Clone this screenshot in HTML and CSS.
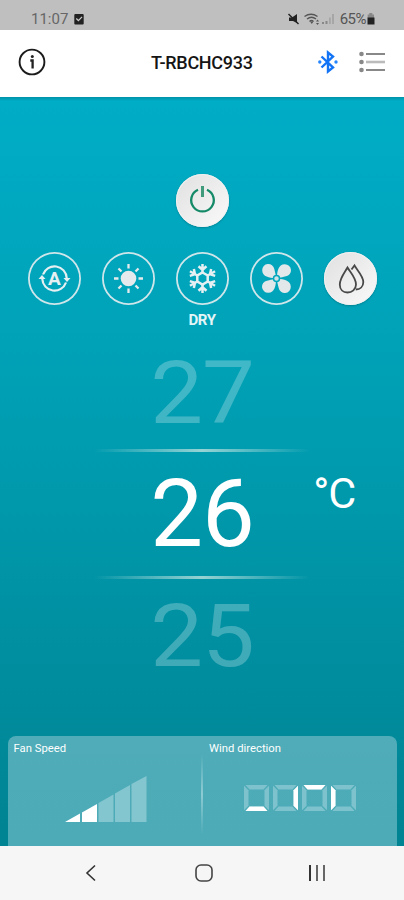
FILE: index.html
```html
<!DOCTYPE html>
<html lang="en">
<head>
    <meta charset="UTF-8">
    <meta name="viewport" content="width=device-width, initial-scale=1.0">
    <title>T-RBCHC933</title>
    <link rel="stylesheet" href="styles.css">
</head>
<body>

<div class="status-bar">
    <span class="clock">11:07</span>
    <svg class="check-icon" width="10" height="12" viewBox="0 0 10 12">
        <rect x="0.3" y="1" width="9.4" height="10.5" rx="1" fill="#222"/>
        <path d="M2.3 5.5 4.4 7.6 8 3.9" fill="none" stroke="#ccc" stroke-width="1.3"/>
    </svg>
    <svg class="signal-icons" width="49" height="14" viewBox="0 0 49 14">
        <path d="M1 5.500h3l5-3.500v9L5 9H1z" fill="#222"/>
        <path d="M0.500 2 10.500 12" stroke="#222" stroke-width="1.500"/>
        <g fill="none" stroke="#555" stroke-width="1.400">
            <path d="M16.500 4.500q6.500-4.500 13 0M19 7q4.500-3.500 9 0M21.500 9.500q2-1.800 4 0"/>
        </g>
        <path d="M22 9.500h3.500l-1.700 2.500zM28 9.500l1.500-2 1.500 2zM28 11l1.500 2 1.500-2z" fill="#555"/>
        <path d="M34 12v-2h2v2zM37.500 12V9h2v3z" fill="#888"/>
        <path d="M41 12V5.500h1.800V12zM44 12V2h2v10z" fill="#a6a6a6"/>
    </svg>
    <span class="battery-text">65%</span>
    <svg width="8" height="12" viewBox="0 0 8 12">
        <path d="M2.300 0h3v1.500H7V5H.7V1.500h1.600z" fill="#888"/>
        <path d="M.5 4.500h7v7h-7z" fill="#222"/>
    </svg>
</div>

<header class="header">
    <svg width="28" height="28" viewBox="0 0 28 28">
        <circle cx="14" cy="14" r="12.400" fill="none" stroke="#1b1b1b" stroke-width="1.900"/>
        <circle cx="14.300" cy="8.500" r="1.500" fill="#222"/>
        <path d="M12.300 12.500h2.300V20.500" fill="none" stroke="#222" stroke-width="2.300"/>
    </svg>
    <h1 class="title">T-RBCHC933</h1>
    <svg class="bluetooth" width="22" height="24" viewBox="0 0 22 24">
        <path d="M4.500 6.500 16 17.500 11 21.500V2.500l5 4L4.500 17.500" fill="none" stroke="#1273f5" stroke-width="2.400"/>
        <circle cx="2.800" cy="12" r="1.700" fill="#2585ff"/>
        <circle cx="19" cy="12" r="1.700" fill="#2585ff"/>
    </svg>
    <svg class="menu" width="26" height="22" viewBox="0 0 26 22">
        <g fill="#888">
            <circle cx="2.500" cy="3" r="2.300"/>
            <circle cx="2.500" cy="11" r="2.300"/>
            <circle cx="2.500" cy="19" r="2.300"/>
        </g>
        <path d="M7 3h19M7 19h19" stroke="#888" stroke-width="1.800"/>
        <path d="M7 11h19" stroke="#bbb" stroke-width="2.600"/>
    </svg>
</header>

<main class="main">
    <button class="round-btn filled power" aria-label="Power">
        <svg width="53" height="53" viewBox="0 0 53 53">
            <path d="M22 15.800A11.300 11.300 0 1 0 31 15.800" fill="none" stroke="#158a68" stroke-width="2.300"/>
            <path d="M26.500 12v11" stroke="#3f9b7c" stroke-width="3"/>
        </svg>
    </button>

    <div class="modes">
        <button class="round-btn" aria-label="Auto">
            <svg width="53" height="53" viewBox="0 0 53 53">
                <g fill="none" stroke="#e6f0f2" stroke-width="2.200">
                    <path d="M15 22.500A12.200 12.200 0 0 1 38.700 26M38 30.500A12.200 12.200 0 0 1 14.300 27"/>
                </g>
                <path d="M35.500 26h7L39 30zM10.500 27h7L14 23z" fill="#e6f0f2"/>
                <text class="auto-letter" x="26.500" y="33.300" text-anchor="middle">A</text>
            </svg>
        </button>
        <button class="round-btn" aria-label="Heat">
            <svg width="53" height="53" viewBox="0 0 53 53">
                <circle cx="26.500" cy="26.500" r="7.800" fill="#e6eaec"/>
                <path d="M26.500 12v4.500M26.500 36.500V41M12 26.500h4.500M36.500 26.500H41M16.500 16.500l3 3M33.500 33.500l3 3M16.500 36.500l3-3M33.500 19.500l3-3" stroke="#e6eaec" stroke-width="2.300"/>
            </svg>
        </button>
        <button class="round-btn" aria-label="Cool">
            <svg width="53" height="53" viewBox="0 0 53 53">
                <defs>
                    <path id="arm" d="M26.500 21V12M22.500 14.200l4 3.600 4-3.600"/>
                </defs>
                <g fill="none" stroke="#e6f0f2" stroke-width="2.500">
                    <path d="M26.500 20.500l5.200 3v6l-5.200 3-5.200-3v-6z"/>
                    <use href="#arm"/>
                    <use href="#arm" transform="rotate(60 26.500 26.500)"/>
                    <use href="#arm" transform="rotate(120 26.500 26.500)"/>
                    <use href="#arm" transform="rotate(180 26.500 26.500)"/>
                    <use href="#arm" transform="rotate(240 26.500 26.500)"/>
                    <use href="#arm" transform="rotate(300 26.500 26.500)"/>
                </g>
            </svg>
        </button>
        <button class="round-btn" aria-label="Fan">
            <svg width="53" height="53" viewBox="0 0 53 53">
                <defs>
                    <path id="blade" d="M24.500 26C20 25.800 12.200 25 12.200 18.200A6.100 6.100 0 0 1 24.300 17C25 20 25.500 22 26 24z"/>
                </defs>
                <g fill="#e2e8ea">
                    <use href="#blade"/>
                    <use href="#blade" transform="rotate(90 26.500 26.500)"/>
                    <use href="#blade" transform="rotate(180 26.500 26.500)"/>
                    <use href="#blade" transform="rotate(270 26.500 26.500)"/>
                </g>
                <circle cx="26.500" cy="26.500" r="3" fill="#cfe3e7" stroke="#00a7bd" stroke-width="1.500"/>
            </svg>
        </button>
        <button class="round-btn filled" aria-label="Dry">
            <svg width="53" height="53" viewBox="0 0 53 53">
                <g fill="none" stroke="#484848" stroke-width="1.800">
                    <path d="M23.500 15.500C21 20 15.800 26 15.800 32.500c0 5 3.300 8 7.700 8s8.500-3 8.500-8c0-6.500-6-12.500-8.500-17z"/>
                    <path d="M27.500 17.500l3-4C33 18 39.300 24 39.300 30c0 4.500-3 7.500-7.500 7.500"/>
                </g>
            </svg>
        </button>
    </div>
    <div class="mode-name">DRY</div>

    <div class="picker">
        <div class="temp faded above">27</div>
        <div class="line"></div>
        <div class="temp">26<span class="unit">°C</span></div>
        <div class="line"></div>
        <div class="temp faded below">25</div>
    </div>

    <div class="panel">
        <div class="panel-item">
            <span class="panel-label">Fan Speed</span>
            <svg class="fan-speed" width="82" height="47" viewBox="0 0 82 47">
                <path d="M0 46 15 37.500V46zM17 46V36.500L32 28v18z" fill="#fff"/>
                <path d="M33.500 46V27L48.500 18.500V46zM50 46V17.500L65 9v37zM66.500 46V8L81.500 0v46z" fill="#83c6d0"/>
            </svg>
        </div>
        <div class="divider"></div>
        <div class="panel-item">
            <span class="panel-label">Wind direction</span>
            <svg class="wind" width="114" height="27" viewBox="0 0 114 27">
                <defs>
                    <path id="top" d="M1.500 0h22l-4 4.500h-14z"/>
                    <path id="bottom" d="M1.500 26h22l-4-4.500h-14z"/>
                    <path id="left" d="M0 .8l4.500 4.500v15.400L0 25.200z"/>
                    <path id="right" d="M25 .8l-4.500 4.500v15.400l4.500 4.500z"/>
                    <g id="cell">
                        <use href="#top"/>
                        <use href="#bottom"/>
                        <use href="#left"/>
                        <use href="#right"/>
                    </g>
                </defs>
                <g fill="#7dc2cd">
                    <use href="#cell"/>
                    <use href="#cell" x="29"/>
                    <use href="#cell" x="58"/>
                    <use href="#cell" x="87"/>
                </g>
                <g fill="#fff">
                    <use href="#bottom"/>
                    <use href="#right" x="29"/>
                    <use href="#top" x="58"/>
                    <use href="#left" x="87"/>
                </g>
            </svg>
        </div>
    </div>
</main>

<nav class="nav-bar">
    <svg width="12" height="18" viewBox="0 0 12 18">
        <path d="M10 1.500 2 9l8 7.500" fill="none" stroke="#333" stroke-width="1.600"/>
    </svg>
    <svg class="home" width="18" height="18" viewBox="0 0 18 18">
        <rect x="1" y="1" width="16" height="16" rx="5" fill="none" stroke="#444" stroke-width="1.600"/>
    </svg>
    <svg width="18" height="18" viewBox="0 0 18 18">
        <path d="M2 1v16" stroke="#333" stroke-width="2"/>
        <path d="M9 1v16M16 1v16" stroke="#666" stroke-width="2"/>
    </svg>
</nav>

</body>
</html>
```
FILE: styles.css
```css
* {
    box-sizing: border-box;
}

body {
    font-family: Roboto, sans-serif;
    margin: 0;
    width: 404px;
    height: 900px;
    display: flex;
    flex-direction: column;
    overflow: hidden;
}

svg {
    display: block;
    flex-shrink: 0;
}

.status-bar {
    height: 30px;
    background-color: #bfbfbf;
    display: flex;
    align-items: center;
    padding: 8px 29px 0 31px;
    color: #666;
    font-size: 15px;
}

.check-icon {
    margin-left: 6px;
}

.signal-icons {
    margin-left: auto;
    margin-right: 3px;
}

.battery-text {
    color: #555;
    font-size: 15px;
    letter-spacing: -0.5px;
    margin-right: 1px;
}

.header {
    height: 67px;
    background-color: #fff;
    display: flex;
    align-items: center;
    padding: 0 19px 3px 18px;
}

.title {
    margin: 0 0 0 105px;
    font-size: 18px;
    font-weight: 500;
    letter-spacing: -0.3px;
    color: #151515;
    white-space: nowrap;
}

.bluetooth {
    margin-left: auto;
}

.menu {
    margin-left: 20px;
}

.main {
    height: 749px;
    background: linear-gradient(#0092a8, #00adc6 4px, #00a2b7 33%, #008392);
    display: flex;
    flex-direction: column;
    align-items: center;
    padding-top: 77px;
}

.round-btn {
    width: 53px;
    height: 53px;
    padding: 0;
    border: none;
    border-radius: 50%;
    background: none;
    box-shadow: inset 0 0 0 1.8px #cfe6ea;
}

.filled {
    background: linear-gradient(135deg, #e0e0e0, #fafafa);
    box-shadow: inset 0 0 0 1px #f0f0f0, 0 1px 2px rgba(0, 60, 70, 0.35);
}

.modes {
    margin-top: 25px;
    display: flex;
    gap: 21px;
}

.auto-letter {
    font-family: Roboto, sans-serif;
    font-size: 19px;
    font-weight: 700;
    fill: #e6f0f2;
}

.mode-name {
    margin-top: 5px;
    height: 20px;
    line-height: 20px;
    font-size: 15px;
    font-weight: 700;
    letter-spacing: -0.4px;
    color: #e4f5f7;
}

.picker {
    width: 100%;
    margin-top: 19px;
    display: flex;
    flex-direction: column;
    align-items: center;
}

.temp {
    position: relative;
    height: 124px;
    line-height: 124px;
    font-size: 94px;
    letter-spacing: -1px;
    color: #fff;
}

/* neighbouring values look slightly flattened, like on a wheel */
.faded {
    color: rgba(255, 255, 255, 0.25);
    transform: scaleY(0.93);
}

.above {
    height: 100px;
    line-height: 89px;
    transform-origin: 50% 44.5px;
}

.below {
    height: 114px;
    line-height: 114px;
}

.unit {
    position: absolute;
    left: 163px;
    top: 19px;
    font-size: 43px;
    line-height: 45px;
}

.line {
    width: 216px;
    height: 3px;
    background: linear-gradient(90deg, transparent, rgba(200, 230, 225, 0.75), transparent);
}

.panel {
    width: 389px;
    height: 110px;
    margin-top: auto;
    background: linear-gradient(#4facb8, #4cabb7);
    border-radius: 8px 8px 0 0;
    display: flex;
}

.panel-item {
    flex: 1;
    padding: 6px 0 0 6px;
}

.panel-label {
    display: block;
    height: 14px;
    line-height: 14px;
    font-size: 11.3px;
    color: #fff;
}

.divider {
    width: 2px;
    height: 80px;
    margin-top: 18px;
    background: linear-gradient(transparent, #8ecbd3, transparent);
}

.fan-speed {
    margin: 20px 0 0 51px;
}

.wind {
    margin: 29px 0 0 35px;
}

.nav-bar {
    height: 54px;
    background-color: #f6f6f6;
    display: flex;
    align-items: center;
    justify-content: space-between;
    padding: 0 78px 0 85px;
}

.home {
    margin-left: 2px;
}
```
